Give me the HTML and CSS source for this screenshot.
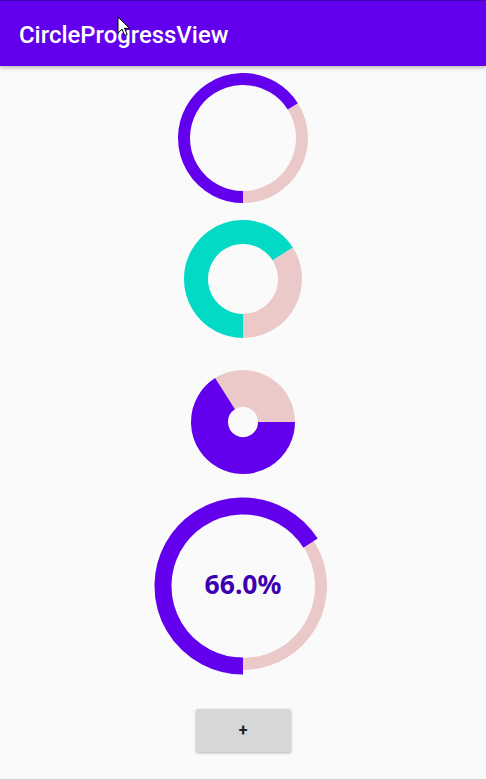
FILE: index.html
```html
<!DOCTYPE html>
<html>
<head>
<meta charset="utf-8">
<link rel="stylesheet" href="styles.css">
</head>
<body>
<div class="screen">
  <header class="appbar">
    <h1 class="title">CircleProgressView</h1>
  </header>
  <main class="content">
    <svg class="ring ring-1" width="132" height="132" viewBox="0 0 132 132">
      <path d="M115.81 34.39 A59 59 0 0 1 66 125" fill="none" stroke="#ECC9C9" stroke-width="12"/>
      <path d="M66 125 A59 59 0 1 1 115.81 34.39" fill="none" stroke="#6200EE" stroke-width="12"/>
    </svg>
    <svg class="ring ring-2" width="120" height="120" viewBox="0 0 120 120">
      <path d="M99.68 34.82 A47 47 0 0 1 60 107" fill="none" stroke="#ECC9C9" stroke-width="24"/>
      <path d="M60 107 A47 47 0 1 1 99.68 34.82" fill="none" stroke="#03DAC5" stroke-width="24"/>
    </svg>
    <svg class="ring ring-3" width="106" height="106" viewBox="0 0 106 106">
      <path d="M35.05 24.72 A33.5 33.5 0 0 1 86.5 53" fill="none" stroke="#ECC9C9" stroke-width="37"/>
      <path d="M86.5 53 A33.5 33.5 0 1 1 35.05 24.72" fill="none" stroke="#6200EE" stroke-width="37"/>
    </svg>
    <div class="big">
      <svg class="ring ring-4" width="180" height="180" viewBox="0 0 180 180">
        <path d="M155.85 48.2 A78 78 0 0 1 90 168" fill="none" stroke="#ECC9C9" stroke-width="12"/>
        <path d="M90 170 A80 80 0 1 1 157.54 47.14" fill="none" stroke="#6200EE" stroke-width="17"/>
      </svg>
      <span class="percent">66.0%</span>
    </div>
    <button class="add">+</button>
  </main>
  <svg class="cursor" width="14" height="22" viewBox="0 0 14 22">
    <path d="M1 1 L1 17 L5 13.2 L7.8 19.5 L10.2 18.5 L7.5 12.3 L12.5 12.3 Z" fill="#fff" stroke="#000" stroke-width="1" stroke-linejoin="round"/>
  </svg>
</div>
</body>
</html>
```
FILE: styles.css
```css
* { box-sizing: border-box; }
html, body {
  margin: 0;
  padding: 0;
  background: #FAFAFA;
}
.screen {
  position: relative;
  width: 486px;
  height: 780px;
  overflow: hidden;
  border-bottom: 1px solid #CFCFCF;
  background: #FAFAFA;
}
.appbar {
  height: 66px;
  background: #6200EE;
  border-top: 1px solid #3F00B5;
  box-shadow: 0 2px 4px rgba(0, 0, 0, 0.25);
  display: flex;
  align-items: center;
  padding-left: 19px;
  position: relative;
  z-index: 1;
}
.title {
  margin: 0;
  font-family: Roboto, "Noto Sans", sans-serif;
  font-weight: 500;
  font-size: 23.9px;
  color: #FFFFFF;
  padding-top: 2px;
}
.content {
  display: flex;
  flex-direction: column;
  align-items: center;
}
.ring { display: block; }
.ring-1 { margin-top: 6px; }
.ring-2 { margin-top: 15px; }
.ring-3 { margin-top: 30px; }
.big {
  margin-top: 21px;
  position: relative;
  width: 180px;
  height: 180px;
  display: flex;
  align-items: center;
  justify-content: center;
}
.big .ring-4 {
  position: absolute;
  left: 0;
  top: 0;
}
.percent {
  position: relative;
  font-family: "Noto Sans", "Open Sans", sans-serif;
  font-weight: 700;
  font-size: 26.5px;
  color: #3A00B0;
  margin-top: -4px;
}
.add {
  margin-top: 33px;
  width: 95px;
  height: 43px;
  border: none;
  border-radius: 2px;
  background: #D6D7D7;
  box-shadow: 0 1px 3px rgba(0, 0, 0, 0.3);
  font-family: Roboto, sans-serif;
  font-weight: 700;
  font-size: 16px;
  color: #222222;
  padding: 0;
}
.cursor {
  position: absolute;
  left: 117px;
  top: 16px;
  z-index: 2;
}
```
